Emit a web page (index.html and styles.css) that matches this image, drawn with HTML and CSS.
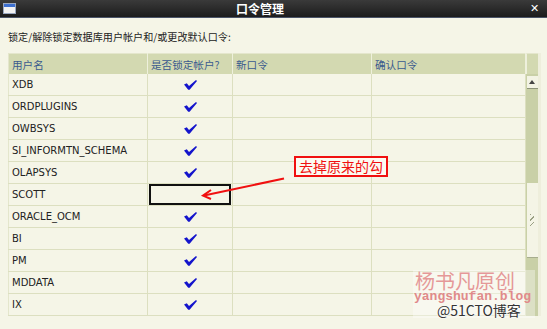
FILE: index.html
```html
<!DOCTYPE html>
<html lang="zh-CN">
<head>
  <meta charset="UTF-8">
  <title>口令管理</title>
  <link rel="stylesheet" href="styles.css">
</head>
<body>

  <div class="titlebar">
    <svg class="win-icon" width="13" height="11" viewBox="0 0 13 11">
      <rect x="0.5" y="0.5" width="12" height="10" fill="#f2f2f2" stroke="#9aa8c0"/>
      <rect x="1" y="1" width="11" height="3" fill="#3c6fd0"/>
    </svg>
    <div class="title">口令管理</div>
    <div class="close">✕</div>
  </div>

  <div class="content">
    <p class="intro">锁定/解除锁定数据库用户帐户和/或更改默认口令:</p>

    <div class="grid">
      <table class="users">
        <colgroup>
          <col style="width:139px">
          <col style="width:85px">
          <col style="width:139px">
          <col style="width:154px">
        </colgroup>
        <thead>
          <tr><th>用户名</th><th>是否锁定帐户?</th><th>新口令</th><th>确认口令</th></tr>
        </thead>
        <tbody id="rows"></tbody>
      </table>

      <div class="scroll">
        <div class="corner"></div>
        <div class="track">
          <div class="btn-up"><span></span></div>
          <div class="thumb"><i></i></div>
        </div>
      </div>
    </div>
  </div>

  <!-- annotation on top of the screenshot -->
  <div class="note">去掉原来的勾</div>
  <svg class="arrow" width="547" height="329" viewBox="0 0 547 329">
    <line x1="284" y1="178.5" x2="204" y2="195.5" stroke="#f01010" stroke-width="2"/>
    <polyline points="211,190 203,195.6 211,199" fill="none" stroke="#f01010" stroke-width="2"/>
  </svg>

  <div class="watermark">
    <div class="wm-name">杨书凡原创</div>
    <div class="wm-url">yangshufan.blog</div>
  </div>
  <div class="wm-51">@51CTO博客</div>

  <script>
    const users = [
      ["XDB", true], ["ORDPLUGINS", true], ["OWBSYS", true],
      ["SI_INFORMTN_SCHEMA", true], ["OLAPSYS", true], ["SCOTT", false],
      ["ORACLE_OCM", true], ["BI", true], ["PM", true],
      ["MDDATA", true], ["IX", true]
    ];

    const check = '<svg width="13" height="10" viewBox="0 0 13 10">' +
      '<polygon points="0,4.4 2.8,3.2 5,6 12,0 13,0.9 5.6,9.8 4.2,9.8" fill="#1414cc"/></svg>';

    const tbody = document.getElementById("rows");
    users.forEach(([name, locked]) => {
      const tr = document.createElement("tr");
      const lockCell = locked ? check : '<div class="unlocked"></div>';
      tr.innerHTML = `<td>${name}</td><td class="lock">${lockCell}</td><td></td><td></td>`;
      tbody.appendChild(tr);
    });
  </script>
</body>
</html>
```

FILE: styles.css
```css
body {
  margin: 0;
  width: 547px;
  height: 329px;
  position: relative;
  overflow: hidden;
  background: #f5f5e7;
  font-family: "DejaVu Sans", "Noto Sans CJK SC", sans-serif;
  color: #222;
}

.titlebar {
  height: 17px;
  display: flex;
  align-items: center;
  background: linear-gradient(#3a3a3a, #1c1c1c);
  border-bottom: 1px solid #4a5468;
  color: #fff;
}

.win-icon {
  margin-left: 3px;
}

.title {
  flex: 1;
  text-align: center;
  padding-right: 26px;
  font-family: "Noto Sans CJK SC", sans-serif;
  font-size: 12px;
  font-weight: bold;
}

.close {
  width: 12px;
  margin-right: 5px;
  font-family: "DejaVu Sans", sans-serif;
  font-size: 11px;
  font-weight: bold;
}

.content {
  padding-left: 8px;
}

.intro {
  margin: 12px 0 9px;
  height: 14px;
  line-height: 14px;
  font-family: "Noto Sans CJK SC", sans-serif;
  font-size: 10.1px;
  color: #222;
}

.grid {
  display: flex;
  align-items: flex-start;
}

.users {
  width: 517px;
  table-layout: fixed;
  border-collapse: collapse;
  border-top: 1px solid #e4e6cc;
  border-left: 1px solid #e4e6cc;
}

.users th {
  height: 20px;
  padding: 0 0 0 3px;
  text-align: left;
  background: #d3d9b1;
  border-right: 1px solid #eef0dc;
  font-family: "Noto Sans CJK SC", sans-serif;
  font-size: 10.6px;
  font-weight: normal;
  color: #3a5a8e;
}

.users td {
  height: 21px;
  padding: 0 0 0 3px;
  border-right: 1px solid #dcdfc0;
  border-bottom: 1px solid #dcdfc0;
  font-size: 10px;
  color: #222;
  white-space: nowrap;
}

.users td.lock {
  padding: 0;
  text-align: center;
  line-height: 0;
}

.unlocked {
  width: 82px;
  height: 21px;
  margin-left: 1px;
  box-sizing: border-box;
  border: 2px solid #111;
}

.scroll {
  width: 12px;
  height: 263px;
  display: flex;
  flex-direction: column;
  border-right: 3px solid #eeeedc;
}

.corner {
  height: 20px;
  background: #d3d9b1;
  border-top: 1px solid #e4e6cc;
  border-left: 1px solid #eef0dc;
}

.track {
  flex: 1;
  background: #c9d0a7;
  display: flex;
  flex-direction: column;
  align-items: center;
}

.btn-up {
  width: 11px;
  height: 12px;
  margin-top: 2px;
  background: #f3f3e4;
  border-bottom: 1px solid #8d937a;
  display: flex;
  align-items: center;
  justify-content: center;
}

.btn-up span {
  width: 0;
  height: 0;
  border-left: 3px solid transparent;
  border-right: 3px solid transparent;
  border-bottom: 4px solid #444;
}

.thumb {
  width: 11px;
  height: 74px;
  margin-top: 94px;
  background: #f4f4e6;
  border-bottom: 1px solid #a7ad8e;
  display: flex;
  align-items: center;
  justify-content: center;
}

.thumb i {
  width: 4px;
  height: 12px;
  background: repeating-linear-gradient(135deg, #9aa084 0 1px, transparent 1px 4px);
}

/* annotation layer */
.note {
  position: absolute;
  left: 294px;
  top: 156px;
  height: 17px;
  line-height: 17px;
  padding: 0 3px;
  border: 2px solid #f01010;
  background: #fbfbf2;
  font-family: "Noto Sans CJK SC", sans-serif;
  font-size: 14px;
  color: #f01010;
}

.arrow {
  position: absolute;
  left: 0;
  top: 0;
  pointer-events: none;
}

.watermark {
  position: absolute;
  left: 413px;
  top: 270px;
  width: 122px;
  height: 48px;
  background: rgba(255, 255, 255, 0.35);
}

.wm-name {
  margin: 1px 0 0 2px;
  height: 20px;
  line-height: 20px;
  font-family: "Noto Sans CJK SC", sans-serif;
  font-size: 20px;
  color: #e59898;
}

.wm-url {
  margin-left: 1px;
  height: 11px;
  line-height: 11px;
  font-family: "Liberation Mono", monospace;
  font-size: 13px;
  font-weight: bold;
  color: #e08a8a;
}

.wm-51 {
  position: absolute;
  left: 437px;
  top: 303px;
  line-height: 15px;
  font-family: "Noto Sans CJK SC", sans-serif;
  font-size: 14px;
  color: #333;
  text-shadow: 0 0 2px #fff, 0 0 2px #fff;
}
```
